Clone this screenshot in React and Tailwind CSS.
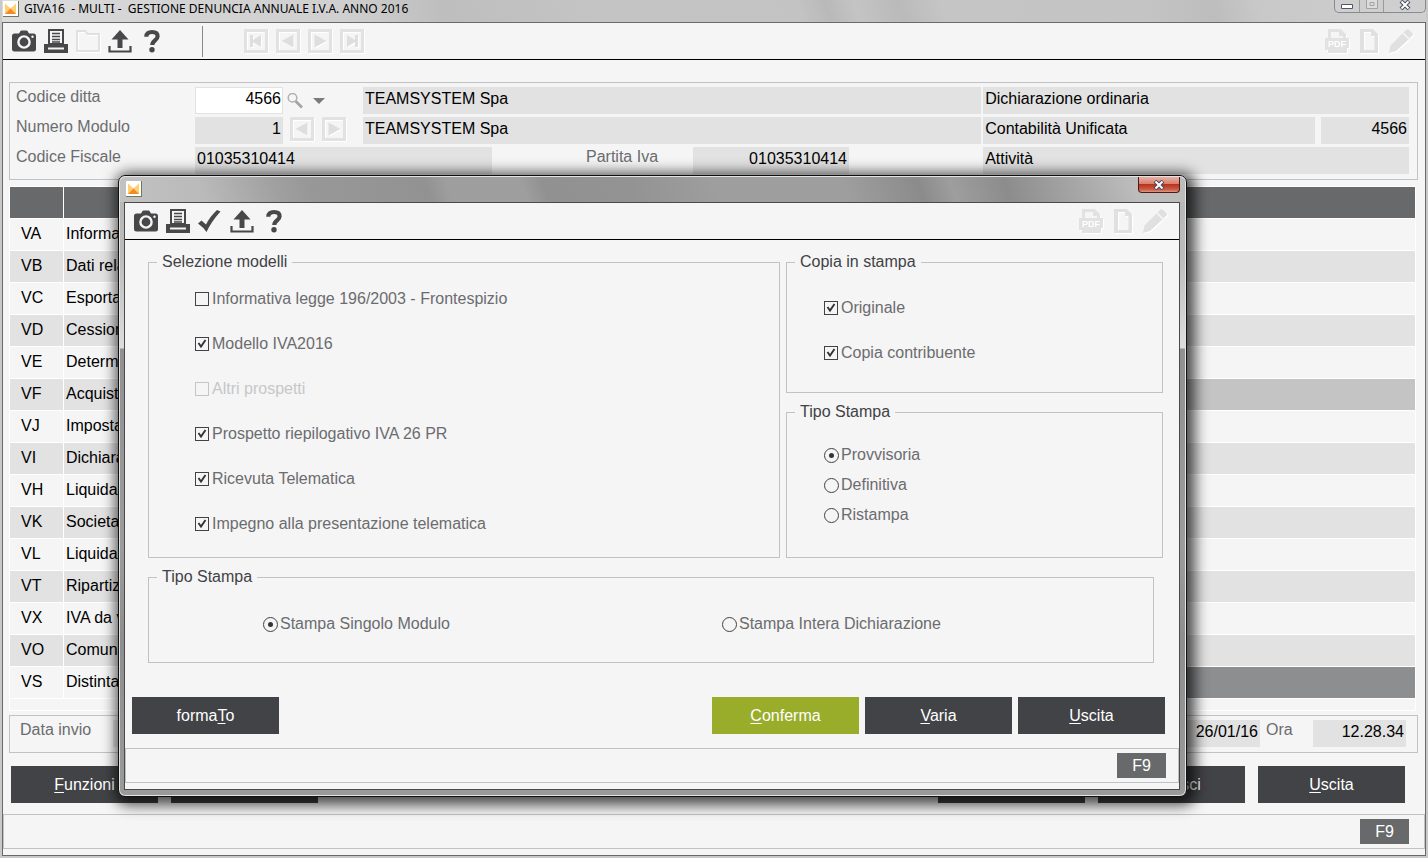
import { useState } from 'react';

const sections = [
  { code: 'VA', text: 'Informazioni' },
  { code: 'VB', text: 'Dati relativi' },
  { code: 'VC', text: 'Esportatori' },
  { code: 'VD', text: 'Cessioni' },
  { code: 'VE', text: 'Determinazione' },
  { code: 'VF', text: 'Acquisti', state: 'bg-[#c4c4c4]' },
  { code: 'VJ', text: 'Imposta' },
  { code: 'VI', text: 'Dichiarazioni' },
  { code: 'VH', text: 'Liquidazioni' },
  { code: 'VK', text: 'Societa' },
  { code: 'VL', text: 'Liquidazione' },
  { code: 'VT', text: 'Ripartizione' },
  { code: 'VX', text: 'IVA da versare' },
  { code: 'VO', text: 'Comunicazioni' },
  { code: 'VS', text: 'Distinta', state: 'bg-[#8d8e90]' },
];

const initialModels = [
  { id: 'informativa', label: 'Informativa legge 196/2003 - Frontespizio', checked: false },
  { id: 'modello', label: 'Modello IVA2016', checked: true },
  { id: 'altri', label: 'Altri prospetti', checked: false, disabled: true },
  { id: 'prospetto', label: 'Prospetto riepilogativo IVA 26 PR', checked: true },
  { id: 'ricevuta', label: 'Ricevuta Telematica', checked: true },
  { id: 'impegno', label: 'Impegno alla presentazione telematica', checked: true },
];

const initialCopies = [
  { id: 'originale', label: 'Originale', checked: true },
  { id: 'contribuente', label: 'Copia contribuente', checked: true },
];

// ---- icons ----

const CameraIcon = () => (
  <svg viewBox="0 0 24 24" className="size-6">
    <path d="M2.5 4.5H7l1.5-2.5q.4-.6 1-.6h5q.6 0 1 .6L17 4.5h4.5Q24 4.5 24 7v13q0 2.5-2.5 2.5h-19Q0 22.500 0 20V7q0-2.500 2.500-2.500Z" fill="#48484a" />
    <circle cx="12" cy="13" r="5.600" fill="none" stroke="#f5f5f5" strokeWidth="2.400" />
    <circle cx="20.500" cy="7.800" r="1.200" fill="#f5f5f5" />
  </svg>
);

const PrinterIcon = () => (
  <svg viewBox="0 0 24 24" className="size-6">
    <path d="M4 0h16v15H4Z" fill="#48484a" />
    <path d="M6 2h12v12H6Z" fill="#f5f5f5" />
    <path d="M8 4.500h8M8 7.500h8M8 10.500h8M8 13h8" stroke="#48484a" strokeWidth="1.300" />
    <path d="M0 15h24v9H0Z" fill="#48484a" />
    <path d="M4 18.500h16v2H4Z" fill="#f5f5f5" />
  </svg>
);

const FolderIcon = () => (
  <svg viewBox="0 0 24 24" className="size-6 drop-shadow-[1px_1px_0_#ffffff]">
    <path d="M1 2h8l3 3h11v17H1Z" fill="none" stroke="#e0e0e0" strokeWidth="2" />
  </svg>
);

const UploadIcon = () => (
  <svg viewBox="0 0 24 24" className="size-6">
    <path d="M12 1 20.500 10.500H14.500V19h-5v-8.500h-6Z" fill="#48484a" />
    <path d="M1.500 17v5.500h21V17" fill="none" stroke="#48484a" strokeWidth="2.200" />
  </svg>
);

const HelpIcon = () => (
  <svg viewBox="0 0 24 24" className="size-6">
    <path d="M6.300 7.800C6.300 4.400 8.400 3 12 3c3.500 0 5.600 1.600 5.600 4.300 0 4.200-5.300 4-5.300 8.700" fill="none" stroke="#48484a" strokeWidth="4.200" />
    <circle cx="12" cy="20.800" r="2.700" fill="#48484a" />
  </svg>
);

const CheckIcon = () => (
  <svg viewBox="0 0 24 24" className="size-6">
    <path d="M0 14.500 3.500 11.500 8 15.500Q12 7.500 19 1l3.500 1.500Q13 13 8.500 23Q5.500 18.500 0 14.500Z" fill="#48484a" />
  </svg>
);

const PdfIcon = () => (
  <svg viewBox="0 0 24 24" className="size-6 drop-shadow-[1px_1px_0_#ffffff]">
    <path d="M3 0h13l5 5v4h3v10h-2v5H3v-3H0V9h3Z" fill="#e2e2e2" />
    <path d="M6 3h8v4h4v2H6Z" fill="#f5f5f5" />
    <text x="12" y="18" textAnchor="middle" fontFamily="Liberation Sans" fontWeight="bold" fontSize="9" fill="#ffffff">PDF</text>
  </svg>
);

const PageIcon = () => (
  <svg viewBox="0 0 24 24" className="size-6 drop-shadow-[1px_1px_0_#ffffff]">
    <path d="M3 0h13l5 5v19H3Zm4 3v18h10.500V7H14V3Z" fill="#e0e0e0" fillRule="evenodd" />
  </svg>
);

const PencilIcon = () => (
  <svg viewBox="0 0 24 24" className="size-6 drop-shadow-[1px_1px_0_#ffffff]">
    <path d="M0 24 1.500 16.500 13.500 4.500l6 6L7 22Z" fill="#e0e0e0" />
    <path d="m14.500 3.500 3-3q1.200-.800 2.500.200l3.500 3.500q.800 1.300 0 2.300l-3 3Z" fill="#e0e0e0" />
  </svg>
);

const navShapes = {
  first: 'M6 6h3v5l8-5v12l-8-5v5H6Z',
  prev: 'M5.500 12 17.500 5.500v13Z',
  next: 'M18.500 12 6.500 5.500v13Z',
  last: 'M18 6h-3v5L7 6v12l8-5v5h3Z',
};

const NavButton = ({ kind, label }) => (
  <button type="button" aria-label={label} disabled className="size-6">
    <svg viewBox="0 0 24 24" className="size-6 drop-shadow-[1px_1px_0_#ffffff]">
      <path d="M1.500 1.500h21v21h-21Z" fill="none" stroke="#e2e2e2" strokeWidth="3" />
      <path d={navShapes[kind]} fill="#dedede" />
    </svg>
  </button>
);

const AppIcon = () => (
  <svg viewBox="0 0 16 16" className="size-4 shrink-0">
    <path d="M0 0h16v16H0Z" fill="#707a5a" />
    <path d="M0 0h15v15H0Z" fill="#ffffff" />
    <path d="M2 2.500 7.500 7.500 13 2.500V13H2Z" fill="#ffcf70" />
    <path d="M2 13 7.500 7.500 13 13Z" fill="#f08c28" />
  </svg>
);

const CloseGlyph = () => (
  <svg viewBox="0 0 12 10" className="h-2.5 w-3">
    <path d="m2 1 8 8m0-8L2 9" stroke="#454c60" strokeWidth="4" />
    <path d="m2.500 1.500 7 7m0-7-7 7" stroke="#ffffff" strokeWidth="2" />
  </svg>
);

// ---- controls ----

const IconButton = ({ label, disabled, children }) => (
  <button type="button" aria-label={label} disabled={disabled} className="size-6">
    {children}
  </button>
);

const Mnemonic = ({ before = '', char, after = '' }) => (
  <span>
    {before}
    <span className="underline underline-offset-2">{char}</span>
    {after}
  </span>
);

const ActionButton = ({ primary, children, ...props }) => (
  <button
    type="button"
    className={`h-[37px] w-[147px] text-white ${primary ? 'bg-[#99ad2b]' : 'bg-[#424346]'}`}
    {...props}
  >
    {children}
  </button>
);

const Field = ({ label, value, className = '' }) => (
  <input
    aria-label={label}
    defaultValue={value}
    readOnly
    className={`h-[27px] min-w-0 bg-[#e2e2e2] px-0.5 pb-1 text-black outline-none ${className}`}
  />
);

const CheckOption = ({ option, onChange }) => (
  <label className={`flex h-[45px] items-center gap-[3px] ${option.disabled ? 'text-[#c6c7c8]' : 'text-[#6b6c6f]'}`}>
    <span className="relative size-3.5">
      <input
        type="checkbox"
        checked={option.checked}
        disabled={option.disabled}
        onChange={() => onChange(option.id)}
        className="peer block size-3.5 appearance-none border border-[#414246] disabled:border-[#c4c5c6]"
      />
      <svg viewBox="0 0 14 14" className="pointer-events-none absolute inset-0 hidden size-3.5 peer-checked:block">
        <path d="M3.500 6 6 9.500 10.500 3" fill="none" stroke="#333438" strokeWidth="1.900" />
      </svg>
    </span>
    {option.label}
  </label>
);

const RadioOption = ({ name, value, current, onChange }) => (
  <label className="flex h-[30px] items-center gap-0.5 text-[#6b6c6f]">
    <input
      type="radio"
      name={name}
      checked={current === value}
      onChange={() => onChange(value)}
      className="grid size-[15px] appearance-none place-content-center rounded-full border border-[#414246] before:size-[5px] before:rounded-full checked:before:bg-[#333438]"
    />
    {value}
  </label>
);

const Group = ({ title, className = '', children }) => (
  <fieldset className={`min-w-0 border border-[#c1c2c3] ${className}`}>
    <legend className="ml-2 px-[5px] text-[#414246]">{title}</legend>
    {children}
  </fieldset>
);

const StatusBar = ({ className = '' }) => (
  <div className={`flex h-[35px] items-center justify-end border border-[#c1c2c3] ${className}`}>
    <button type="button" className="h-[25px] w-[49px] bg-[#68696b] text-white">F9</button>
  </div>
);

const Toolbar = ({ children }) => (
  <div className="flex h-[37px] items-center border-b border-black px-[9px]">
    <div className="flex gap-2">{children[0]}</div>
    {children[1]}
    <div className="ml-auto flex gap-2 pr-[3px]">
      <IconButton label="PDF" disabled><PdfIcon /></IconButton>
      <IconButton label="Nuovo" disabled><PageIcon /></IconButton>
      <IconButton label="Modifica" disabled><PencilIcon /></IconButton>
    </div>
  </div>
);

const PrintDialog = () => {
  const [models, setModels] = useState(initialModels);
  const [copies, setCopies] = useState(initialCopies);
  const [printType, setPrintType] = useState('Provvisoria');
  const [scope, setScope] = useState('Stampa Singolo Modulo');

  const toggle = (setter) => (id) => {
    setter((items) => items.map((item) => (item.id === id ? { ...item, checked: !item.checked } : item)));
  };

  return (
    <div
      role="dialog"
      aria-label="Stampa"
      className="rounded-[7px] border border-[#111111] bg-[linear-gradient(180deg,#b4b4b4_0,#bcbcbc_80px,#dddddd_172px,#919191_173px,#9c9c9c_60%,#8e8e8e_75%,#9a9a9a_100%)] pr-1.5 pb-1.5 pl-[5px] shadow-[3px_3px_14px_5px_rgba(0,0,0,0.7),inset_0_0_0_1px_#e4e4e4]"
    >
      <div className="-mr-[5px] -ml-1 flex h-[26px] items-start justify-between rounded-t-[6px] border-t border-[#e4e4e4] bg-[linear-gradient(72deg,#c2c2c2_0%,#bababa_8%,#a0a0a0_15%,#989898_18%,#929292_29%,#9e9e9e_31%,#9e9e9e_38%,#919191_40%,#939393_48%,#9e9e9e_56%,#9e9e9e_68%,#8b8b8b_75%,#9e9e9e_78%,#8c8c8c_83%,#9c9c9c_87%,#bcbcbc_95%,#bcbcbc_100%)] pr-[5px] pl-1.5">
        <div className="pt-1"><AppIcon /></div>
        <button
          type="button"
          aria-label="Chiudi"
          className="grid h-4 w-[42px] place-items-center rounded-b-[4px] border border-t-0 border-[#4a1c18] bg-[linear-gradient(180deg,#e8b0a5_0%,#d98070_45%,#b8321c_50%,#cc6048_85%,#e09a88_100%)]"
        >
          <CloseGlyph />
        </button>
      </div>
      <div className="border border-[#4a4a4a] bg-[#f5f5f5]">
        <Toolbar>
          <>
            <IconButton label="Cattura"><CameraIcon /></IconButton>
            <IconButton label="Stampa"><PrinterIcon /></IconButton>
            <IconButton label="Conferma"><CheckIcon /></IconButton>
            <IconButton label="Esporta"><UploadIcon /></IconButton>
            <IconButton label="Aiuto"><HelpIcon /></IconButton>
          </>
          <></>
        </Toolbar>

        <div className="flex flex-col gap-[9px] pt-3 pr-4 pl-[23px]">
          <div className="grid grid-cols-[632fr_377fr] gap-1.5">
            <Group title="Selezione modelli">
              <div className="pt-1 pb-[11px] pl-[46px]">
                {models.map((option) => (
                  <CheckOption key={option.id} option={option} onChange={toggle(setModels)} />
                ))}
              </div>
            </Group>
            <div className="flex flex-col gap-[9px]">
              <Group title="Copia in stampa">
                <div className="pt-[13px] pb-[17px] pl-[37px]">
                  {copies.map((option) => (
                    <CheckOption key={option.id} option={option} onChange={toggle(setCopies)} />
                  ))}
                </div>
              </Group>
              <Group title="Tipo Stampa" className="grow">
                <div className="pt-[18px] pl-[37px]">
                  {['Provvisoria', 'Definitiva', 'Ristampa'].map((value) => (
                    <RadioOption key={value} name="tipo" value={value} current={printType} onChange={setPrintType} />
                  ))}
                </div>
              </Group>
            </div>
          </div>
          <Group title="Tipo Stampa" className="mr-[9px]">
            <div className="grid grid-cols-[459fr_431fr] pt-[22px] pb-[23px] pl-[114px]">
              {['Stampa Singolo Modulo', 'Stampa Intera Dichiarazione'].map((value) => (
                <RadioOption key={value} name="modulo" value={value} current={scope} onChange={setScope} />
              ))}
            </div>
          </Group>
        </div>

        <div className="mt-[34px] mb-3.5 flex gap-1.5 pr-[14px] pl-[7px]">
          <ActionButton><Mnemonic before="forma" char="T" after="o" /></ActionButton>
          <div className="grow" />
          <ActionButton primary><Mnemonic char="C" after="onferma" /></ActionButton>
          <ActionButton><Mnemonic char="V" after="aria" /></ActionButton>
          <ActionButton><Mnemonic char="U" after="scita" /></ActionButton>
        </div>
        <StatusBar className="mb-1.5 pr-3" />
      </div>
    </div>
  );
};

const CompanyForm = () => (
  <div className="grid grid-cols-[179px_168px_minmax(0,619fr)_minmax(0,425fr)] gap-y-[3px] border border-[#c1c2c3] pt-1 pr-2 pb-[5px] pl-1.5 text-[#6b6c6f]">
    <label htmlFor="ditta">Codice ditta</label>
    <div className="flex items-center">
      <input
        id="ditta"
        defaultValue="4566"
        className="h-[27px] w-[88px] border border-[#e2e2e2] bg-white px-px pb-1 text-right text-black outline-none"
      />
      <button type="button" aria-label="Cerca" className="ml-1">
        <svg viewBox="0 0 16 16" className="size-4">
          <path d="m8.500 8 6.500 6.500" stroke="#a0a5a0" strokeWidth="2.600" />
          <circle cx="5.500" cy="4.800" r="4.300" fill="#f5f5f5" stroke="#adb0ad" strokeWidth="1.500" />
        </svg>
      </button>
      <button type="button" aria-label="Elenco ditte" className="ml-2.5">
        <svg viewBox="0 0 12 6" className="h-1.5 w-3">
          <path d="M0 0h12L6 6Z" fill="#7b7b7b" />
        </svg>
      </button>
    </div>
    <Field label="Ragione sociale" value="TEAMSYSTEM Spa" className="mr-0.5" />
    <Field label="Dichiarazione" value="Dichiarazione ordinaria" />

    <span>Numero Modulo</span>
    <div className="flex items-start">
      <Field label="Numero Modulo" value="1" className="w-[88px] text-right" />
      <div className="ml-[7px] flex gap-2">
        <NavButton kind="prev" label="Modulo precedente" />
        <NavButton kind="next" label="Modulo successivo" />
      </div>
    </div>
    <Field label="Denominazione" value="TEAMSYSTEM Spa" className="mr-0.5" />
    <div className="flex gap-1.5">
      <Field label="Contabilità" value="Contabilità Unificata" className="grow" />
      <Field label="Codice contabilità" value="4566" className="w-[88px] text-right" />
    </div>

    <span>Codice Fiscale</span>
    <div className="col-span-2 flex">
      <Field label="Codice Fiscale" value="01035310414" className="w-[297px]" />
      <label htmlFor="piva" className="ml-[94px] w-[107px]">Partita Iva</label>
      <input
        id="piva"
        readOnly
        defaultValue="01035310414"
        className="h-[27px] w-[156px] bg-[#e2e2e2] px-0.5 pb-1 text-right text-black outline-none"
      />
    </div>
    <Field label="Attività" value="Attività" />
  </div>
);

const SectionTable = () => (
  <table className="mt-1.5 mr-0.5 w-[calc(100%-2px)] table-fixed border-separate border-spacing-px bg-white text-left text-black">
    <thead>
      <tr className="h-[31px] bg-[#68696b]">
        <th aria-label="Quadro" className="w-[53px] p-0" />
        <th aria-label="Descrizione" className="w-[600px] p-0" />
        <th aria-label="Stato" className="p-0" />
      </tr>
    </thead>
    <tbody>
      {sections.map((row, i) => {
        const shade = i % 2 ? 'bg-[#e2e2e2]' : 'bg-[#f5f5f5]';
        return (
          <tr key={row.code} className="h-[31px]">
            <td className={`p-0 pb-0.5 pl-[11px] ${shade}`}>{row.code}</td>
            <td className={`p-0 pb-0.5 pl-0.5 ${shade}`}>{row.text}</td>
            <td className={`p-0 ${row.state || shade}`} />
          </tr>
        );
      })}
      <tr className="h-[11px]">
        <td colSpan={3} className="bg-[#f5f5f5] p-0" />
      </tr>
    </tbody>
  </table>
);

const WindowButtons = () => (
  <div className="flex h-[13px] rounded-b-[5px] border border-t-0 border-[#8a8a8a] bg-[#cfcfcf]">
    <button type="button" aria-label="Riduci" className="grid w-[25px] place-items-center border-r border-[#9a9a9a]">
      <svg viewBox="0 0 12 5" className="h-[5px] w-3">
        <path d="M.500.500h11v4H.500Z" fill="#ffffff" stroke="#50566a" />
      </svg>
    </button>
    <button type="button" aria-label="Ingrandisci" disabled className="grid w-6 justify-center border-r border-[#9a9a9a]">
      <svg viewBox="0 0 12 10" className="h-2.5 w-3">
        <path d="M.500-2h11V8.500H.500ZM4 2.500h4v3H4Z" fill="#dcdcdc" stroke="#a2a2a2" />
      </svg>
    </button>
    <button type="button" aria-label="Chiudi" className="grid w-[41px] justify-center">
      <CloseGlyph />
    </button>
  </div>
);

const App = () => (
  <div className="relative min-h-screen overflow-hidden border-x-2 border-b-2 border-[#c9c9c9] font-['Liberation_Sans',Arial,sans-serif] text-[16px] leading-5">
    <div className="flex h-[22px] items-start justify-between bg-[linear-gradient(72deg,#dcdcdc_0%,#d4d4d4_12%,#d0d0d0_24%,#bebebe_31%,#c4c4c4_42%,#c3c3c3_56%,#b9b9b9_58%,#c4c4c4_60%,#bababa_63%,#c5c5c5_66%,#c4c4c4_80%,#bdbdbd_85%,#c8c8c8_88%,#d0d0d0_100%)]">
      <div className="flex items-center gap-[5px] pl-px">
        <AppIcon />
        <h1 className="font-['Noto_Sans','Open_Sans',sans-serif] text-[12px] leading-[18px] whitespace-pre text-black">
          GIVA16  - MULTI -  GESTIONE DENUNCIA ANNUALE I.V.A. ANNO 2016
        </h1>
      </div>
      <WindowButtons />
    </div>

    <main className="border border-[#6a6a6a] bg-[#f5f5f5]">
      <Toolbar>
        <>
          <IconButton label="Cattura"><CameraIcon /></IconButton>
          <IconButton label="Stampa"><PrinterIcon /></IconButton>
          <IconButton label="Apri" disabled><FolderIcon /></IconButton>
          <IconButton label="Esporta"><UploadIcon /></IconButton>
          <IconButton label="Aiuto"><HelpIcon /></IconButton>
        </>
        <div className="ml-[38px] flex h-[31px] items-center gap-2 border-l border-[#8a8a8a] pl-[41px]">
          <NavButton kind="first" label="Primo" />
          <NavButton kind="prev" label="Precedente" />
          <NavButton kind="next" label="Successivo" />
          <NavButton kind="last" label="Ultimo" />
        </div>
      </Toolbar>

      <div className="pt-[22px] pr-[7px] pl-1.5">
        <CompanyForm />
        <SectionTable />
        <div className="mt-1 flex border border-[#c1c2c3] pt-1 pr-[11px] pb-[5px] pl-2.5 text-[#6b6c6f]">
          <label htmlFor="invio" className="w-[93px]">Data invio</label>
          <input id="invio" readOnly className="h-[27px] w-[88px] bg-[#e2e2e2] outline-none" />
          <Field label="Data" value="26/01/16" className="ml-auto w-[88px] text-right" />
          <label htmlFor="ora" className="w-[53px] pl-1.5">Ora</label>
          <input
            id="ora"
            readOnly
            defaultValue="12.28.34"
            className="h-[27px] w-[93px] bg-[#e2e2e2] px-0.5 pb-1 text-right text-black outline-none"
          />
        </div>
        <div className="mt-[13px] mb-[11px] flex gap-[13px] pr-[13px] pl-0.5">
          <ActionButton><Mnemonic char="F" after="unzioni" /></ActionButton>
          <ActionButton aria-label="Stampa" />
          <div className="grow" />
          <ActionButton aria-label="Varia" />
          <ActionButton><Mnemonic char="I" after="nserisci" /></ActionButton>
          <ActionButton><Mnemonic char="U" after="scita" /></ActionButton>
        </div>
      </div>
      <StatusBar className="mb-1.5 pr-[15px]" />
    </main>

    <div className="absolute inset-x-0 top-0 pt-[175px] pr-[239px] pl-[116px]">
      <PrintDialog />
    </div>
  </div>
);

export default App;
